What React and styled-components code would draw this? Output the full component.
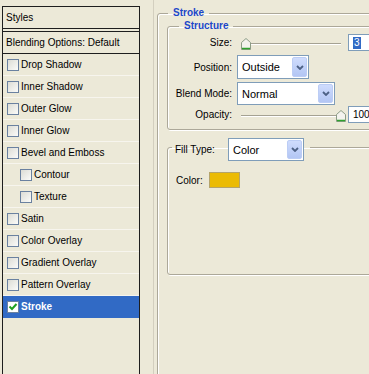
import React from 'react';
import styled, { createGlobalStyle } from 'styled-components';

const GlobalStyle = createGlobalStyle`
  html, body {
    margin: 0;
    padding: 0;
    background: #ece9d8;
    overflow: hidden;
  }
  body {
    font-family: "Liberation Sans", Tahoma, Arial, sans-serif;
    font-size: 10px;
    color: #000;
  }
`;

const effects = [
  { name: 'Drop Shadow' },
  { name: 'Inner Shadow' },
  { name: 'Outer Glow' },
  { name: 'Inner Glow' },
  { name: 'Bevel and Emboss' },
  { name: 'Contour', indent: true },
  { name: 'Texture', indent: true },
  { name: 'Satin' },
  { name: 'Color Overlay' },
  { name: 'Gradient Overlay' },
  { name: 'Pattern Overlay' },
  { name: 'Stroke', checked: true, selected: true },
];

const Chevron = () => (
  <svg width="8" height="5" viewBox="0 0 8 5">
    <path d="M1 1 L4 4 L7 1" fill="none" stroke="#4d6185" strokeWidth="1.8" />
  </svg>
);

const Check = () => (
  <svg width="10" height="10" viewBox="0 0 10 10">
    <path d="M1.5 4.5 L4 7 L8.5 2" fill="none" stroke="#21a121" strokeWidth="2" />
  </svg>
);

const ThumbIcon = () => (
  <svg width="10" height="12" viewBox="0 0 10 12">
    <path d="M0.5 4.5 L5 0.5 L9.5 4.5 V11.5 H0.5 Z" fill="#f4f3ee" stroke="#8c9c86" />
    <path d="M1 10.5 H9" stroke="#2ea12e" strokeWidth="1.5" />
  </svg>
);

const Slider = ({ value, max }) => (
  <SliderWrap>
    <Groove />
    <Thumb style={{ left: 3 + (value / max) * 96 }}>
      <ThumbIcon />
    </Thumb>
  </SliderWrap>
);

const Select = ({ value, width, height }) => (
  <SelectBox $w={width} $h={height}>
    <SelectText>{value}</SelectText>
    <ArrowBtn>
      <Chevron />
    </ArrowBtn>
  </SelectBox>
);

const App = () => {
  return (
    <>
      <GlobalStyle />
      <Window>
        <StylesList>
          <ListHeader>Styles</ListHeader>
          <BlendRow>Blending Options: Default</BlendRow>
          {effects.map((e) => (
            <EffectRow key={e.name} $indent={e.indent} $selected={e.selected}>
              <CheckBox $checked={e.checked}>{e.checked && <Check />}</CheckBox>
              {e.name}
            </EffectRow>
          ))}
        </StylesList>

        <RightPane>
          <Group>
            <Title>Stroke</Title>
            <SubGroup>
              <SubTitle>Structure</SubTitle>
              <Row $h={17}>
                <Label>Size:</Label>
                <Slider value={3} max={250} />
                <NumInput>
                  <Selected>3</Selected>
                </NumInput>
              </Row>
              <Row $h={24} $mt={4}>
                <Label>Position:</Label>
                <Select value="Outside" width={72} height={24} />
              </Row>
              <Row $h={23} $mt={3}>
                <Label>Blend Mode:</Label>
                <Select value="Normal" width={98} height={23} />
              </Row>
              <Row $h={17} $mt={1}>
                <Label>Opacity:</Label>
                <Slider value={100} max={100} />
                <NumInput>100</NumInput>
              </Row>
            </SubGroup>

            <FillGroup>
              <FillLegend>
                <FillLabel>Fill Type:</FillLabel>
                <Select value="Color" width={76} height={23} />
              </FillLegend>
              <ColorRow>
                <ColorLabel>Color:</ColorLabel>
                <Swatch $color="#ebbb05" />
              </ColorRow>
            </FillGroup>
          </Group>
        </RightPane>
      </Window>
    </>
  );
};

const Window = styled.div`
  display: flex;
  width: 369px;
  height: 374px;
  overflow: hidden;
  background: #ece9d8;
`;

const StylesList = styled.div`
  flex-shrink: 0;
  box-sizing: border-box;
  width: 138px;
  margin: 6px 0 0 2px;
  border: 1px solid #1e1e1e;
  border-bottom: none;
  display: flex;
  flex-direction: column;
`;

const ListHeader = styled.div`
  box-sizing: border-box;
  height: 22px;
  padding-left: 3px;
  display: flex;
  align-items: center;
  border-bottom: 1px solid #1e1e1e;
`;

const BlendRow = styled.div`
  box-sizing: border-box;
  height: 23px;
  margin-top: 2px;
  padding-left: 3px;
  display: flex;
  align-items: center;
  border-top: 1px solid #1e1e1e;
  border-bottom: 1px solid #1e1e1e;
`;

const EffectRow = styled.div`
  box-sizing: border-box;
  height: 22px;
  padding-left: ${(p) => (p.$indent ? 17 : 4)}px;
  display: flex;
  align-items: center;
  border-bottom: 1px solid ${(p) => (p.$selected ? '#316ac5' : '#f7f5ee')};
  background: ${(p) => (p.$selected ? '#316ac5' : 'transparent')};
  color: ${(p) => (p.$selected ? '#fff' : '#000')};
  font-weight: ${(p) => (p.$selected ? 'bold' : 'normal')};
`;

const CheckBox = styled.span`
  box-sizing: border-box;
  width: 12px;
  height: 12px;
  margin-right: 2px;
  border: 1px solid #6a81a0;
  background: ${(p) => (p.$checked ? '#fff' : 'linear-gradient(135deg, #dcdcd5, #fbfbf9)')};
  display: flex;
  align-items: center;
  justify-content: center;
`;

const RightPane = styled.div`
  flex-shrink: 0;
  margin-left: 13px;
  padding-left: 3px;
  border-left: 1px solid #d3cfbf;
`;

const Group = styled.fieldset`
  box-sizing: border-box;
  width: 250px;
  min-width: 0;
  min-height: 420px;
  margin: 6px 0 0 0;
  padding: 0 0 0 9px;
  border: 1px solid #aca899;
  border-radius: 3px;
  box-shadow: inset 1px 1px 0 #fff;
`;

const Title = styled.legend`
  margin-left: 1px;
  padding: 0 5px;
  line-height: 14px;
  font-weight: bold;
  color: #1c47c8;
`;

const SubGroup = styled.fieldset`
  box-sizing: border-box;
  width: 240px;
  min-width: 0;
  margin: 0;
  padding: 2px 0 6px 0;
  border: 1px solid #aca899;
  border-radius: 3px;
  box-shadow: inset 1px 1px 0 #fff, 1px 1px 0 #fff;
`;

const SubTitle = styled(Title)`
  margin-left: 11px;
  line-height: 12px;
`;

const Row = styled.div`
  display: flex;
  align-items: center;
  height: ${(p) => p.$h}px;
  margin-top: ${(p) => p.$mt || 0}px;
`;

const Label = styled.span`
  width: 64px;
  margin-right: 5px;
  text-align: right;
  flex-shrink: 0;
`;

const SliderWrap = styled.div`
  position: relative;
  width: 108px;
  height: 100%;
  margin-right: 3px;
  display: flex;
  align-items: center;
`;

const Groove = styled.div`
  flex: 1;
  margin: 3px 4px 0 4px;
  height: 1px;
  background: #a5a293;
  border-bottom: 1px solid #fff;
`;

const Thumb = styled.div`
  position: absolute;
  top: 4px;
  width: 10px;
  height: 12px;
  line-height: 0;
`;

const NumInput = styled.div`
  box-sizing: border-box;
  width: 34px;
  height: 17px;
  padding-left: 4px;
  border: 1px solid #7f9db9;
  background: #fff;
  display: flex;
  align-items: center;
`;

const Selected = styled.span`
  background: #316ac5;
  color: #fff;
  padding: 0 1px;
  line-height: 12px;
`;

const SelectBox = styled.div`
  box-sizing: border-box;
  width: ${(p) => p.$w}px;
  height: ${(p) => p.$h}px;
  border: 1px solid #7f9db9;
  background: #fff;
  display: flex;
  align-items: stretch;
  flex-shrink: 0;
`;

const SelectText = styled.span`
  flex: 1;
  padding-left: 4px;
  display: flex;
  align-items: center;
  font-size: 11px;
`;

const ArrowBtn = styled.span`
  box-sizing: border-box;
  width: 15px;
  margin: 1px;
  border: 1px solid #bccdf5;
  border-radius: 2px;
  background: linear-gradient(#cfdcfd, #b3c6f4);
  display: flex;
  align-items: center;
  justify-content: center;
`;

const FillGroup = styled(SubGroup)`
  margin-top: 3px;
  padding: 11px 0 86px 0;
`;

const FillLegend = styled.legend`
  margin-left: 4px;
  padding: 5px 6px 0 3px;
  display: flex;
  align-items: center;
`;

const FillLabel = styled.span`
  width: 53px;
`;

const ColorRow = styled.div`
  display: flex;
  align-items: center;
  height: 16px;
  padding-left: 8px;
`;

const ColorLabel = styled.span`
  width: 33px;
`;

const Swatch = styled.span`
  box-sizing: border-box;
  width: 31px;
  height: 16px;
  background: ${(p) => p.$color};
  border: 1px solid #b4a46b;
`;

export default App;
